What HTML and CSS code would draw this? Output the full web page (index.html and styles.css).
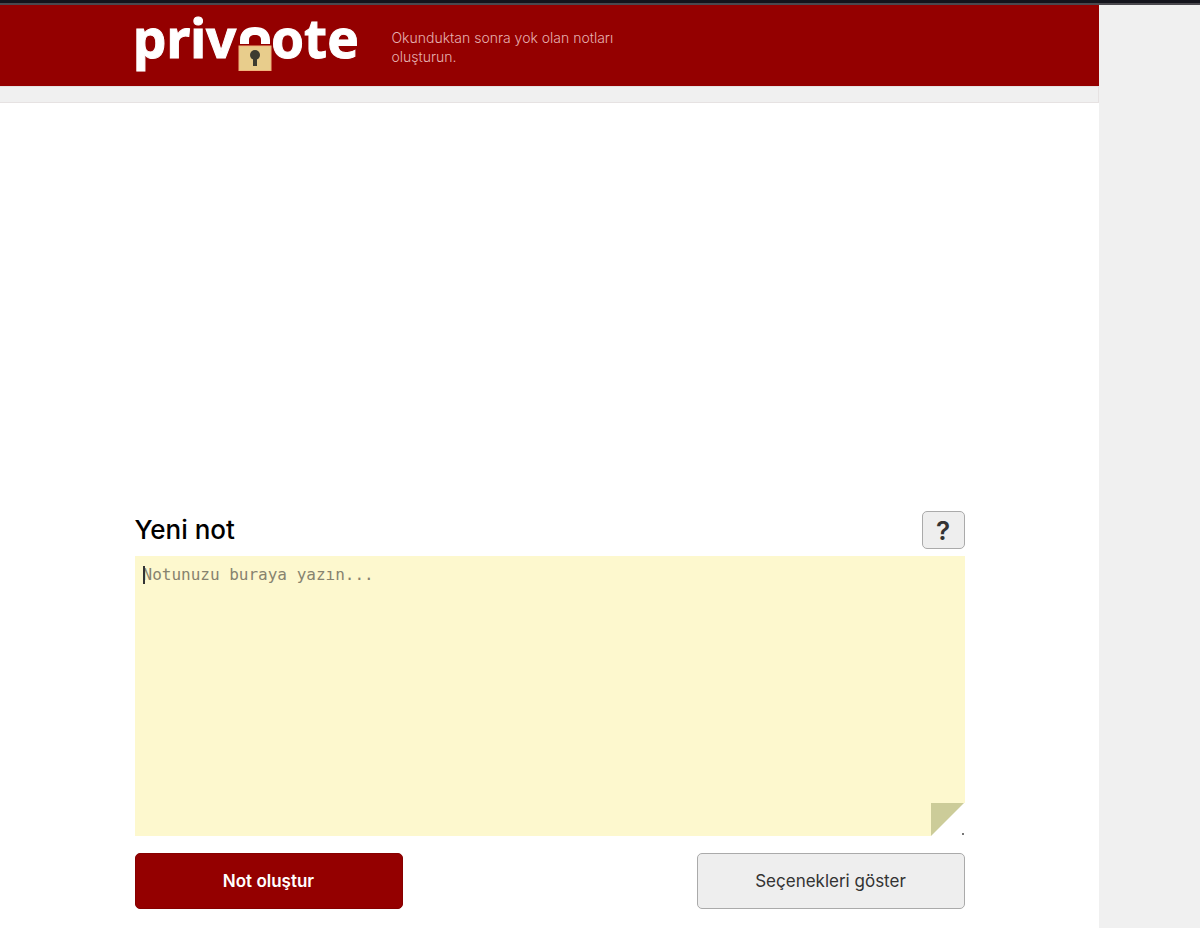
FILE: index.html
```html
<!DOCTYPE html>
<html lang="tr">
<head>
<meta charset="utf-8">
<meta name="viewport" content="width=device-width, initial-scale=1">
<title>Privnote</title>
<link rel="stylesheet" href="styles.css">
</head>
<body>
<div class="topbar"></div>
<div class="layout">
  <div class="page">
    <header class="header">
      <div class="container header-inner">
        <a class="logo" href="#" aria-label="privnote">
          <svg class="logo-art" width="224" height="81" viewBox="0 0 224 81">
            <g class="logo-text">
              <text x="-2" y="53">priv</text>
              <text x="136" y="53">ote</text>
            </g>
            <path d="M105 40V35C105 26.500 111 22 120 22S135 26.500 135 35V40H126V35C126 31.500 124 30 120 30S114 31.500 114 35V40Z" fill="#fff"/>
            <rect x="103" y="39" width="34" height="3" fill="#940000"/>
            <rect x="104" y="41" width="32" height="24.500" fill="#e8cd8c" stroke="#f2b37c" stroke-width="1"/>
            <circle cx="120" cy="50" r="5" fill="#3d3c30"/>
            <path d="M118 52H122V61H118Z" fill="#3d3c30"/>
          </svg>
        </a>
        <p class="tagline">Okunduktan sonra yok olan notları oluşturun.</p>
      </div>
    </header>
    <div class="strip"></div>
    <main class="container">
      <form class="note-form">
        <div class="note-head">
          <h1 class="title"><label for="note">Yeni not</label></h1>
          <button class="btn help" type="button">?</button>
        </div>
        <div class="note-box">
          <textarea class="note" id="note" placeholder="Notunuzu buraya yazın..."></textarea>
          <span class="caret"></span>
          <svg class="fold" width="34" height="33" viewBox="0 0 34 33">
            <path d="M0 0H34V33H0Z" fill="#fff"/>
            <path d="M0 0H33L0 33Z" fill="#cccc99"/>
            <path d="M31 30H33V32H31Z" fill="#777"/>
          </svg>
        </div>
        <div class="actions">
          <button class="btn primary" type="button">Not oluştur</button>
          <button class="btn" type="button">Seçenekleri göster</button>
        </div>
      </form>
    </main>
  </div>
  <aside class="side"></aside>
</div>
</body>
</html>
```

FILE: styles.css
```css
* {
  box-sizing: border-box;
}

body {
  margin: 0;
  min-height: 100vh;
  display: flex;
  flex-direction: column;
  background: #fff;
  color: #000;
  font-family: Inter, "Liberation Sans", sans-serif;
}

.topbar {
  height: 5px;
  background: #14141c;
  border-bottom: 2px solid #4a484e;
}

.layout {
  flex: 1;
  display: flex;
}

.page {
  flex: 1;
}

.side {
  width: 101px;
  background: #f0f0f0;
}

.container {
  max-width: 830px;
  margin: 0 auto;
}

.header {
  background: #940000;
}

.header-inner {
  display: flex;
  align-items: center;
  gap: 33px;
}

.logo-art {
  display: block;
  overflow: visible;
}

.logo-text {
  font-family: "Noto Sans", "Open Sans", sans-serif;
  font-size: 53px;
  font-weight: 700;
  fill: #fff;
  stroke: #fff;
  stroke-width: 1px;
}

.tagline {
  max-width: 240px;
  margin: 2px 0 0;
  color: #e6b0b0;
  font-size: 14px;
  font-weight: 300;
  line-height: 19px;
}

.strip {
  height: 17px;
  background: #f0f0f0;
  border: 1px solid #e6e2e2;
  border-left: 0;
}

.note-form {
  padding: 408px 0 16px;
}

.note-head {
  display: flex;
  justify-content: space-between;
  align-items: center;
  height: 38px;
  margin-bottom: 7px;
}

.title {
  margin: 0;
  font-size: 26px;
  font-weight: 500;
  line-height: 36px;
}

.note-box {
  position: relative;
  display: flex;
}

.note {
  width: 100%;
  height: 280px;
  padding: 8px;
  border: 0;
  outline: 0;
  resize: none;
  background: #fdf8ce;
  color: #333;
  font: 16px/22px "DejaVu Sans Mono", monospace;
}

.note::placeholder {
  color: #87836f;
  opacity: 1;
}

.caret {
  position: absolute;
  top: 10px;
  left: 8px;
  width: 2px;
  height: 18px;
  background: #333;
}

.fold {
  position: absolute;
  right: 0;
  bottom: 0;
}

.actions {
  display: flex;
  justify-content: space-between;
  margin-top: 17px;
}

.btn {
  width: 268px;
  height: 56px;
  padding: 0;
  border: 1px solid #aaa;
  border-radius: 5px;
  background: #eee;
  color: #333;
  font-family: inherit;
  font-size: 17px;
}

.primary {
  border-color: #860000;
  background: #940000;
  color: #fff;
  font-weight: 600;
}

.help {
  width: 43px;
  height: 38px;
  font-size: 26px;
  font-weight: 600;
}
```
